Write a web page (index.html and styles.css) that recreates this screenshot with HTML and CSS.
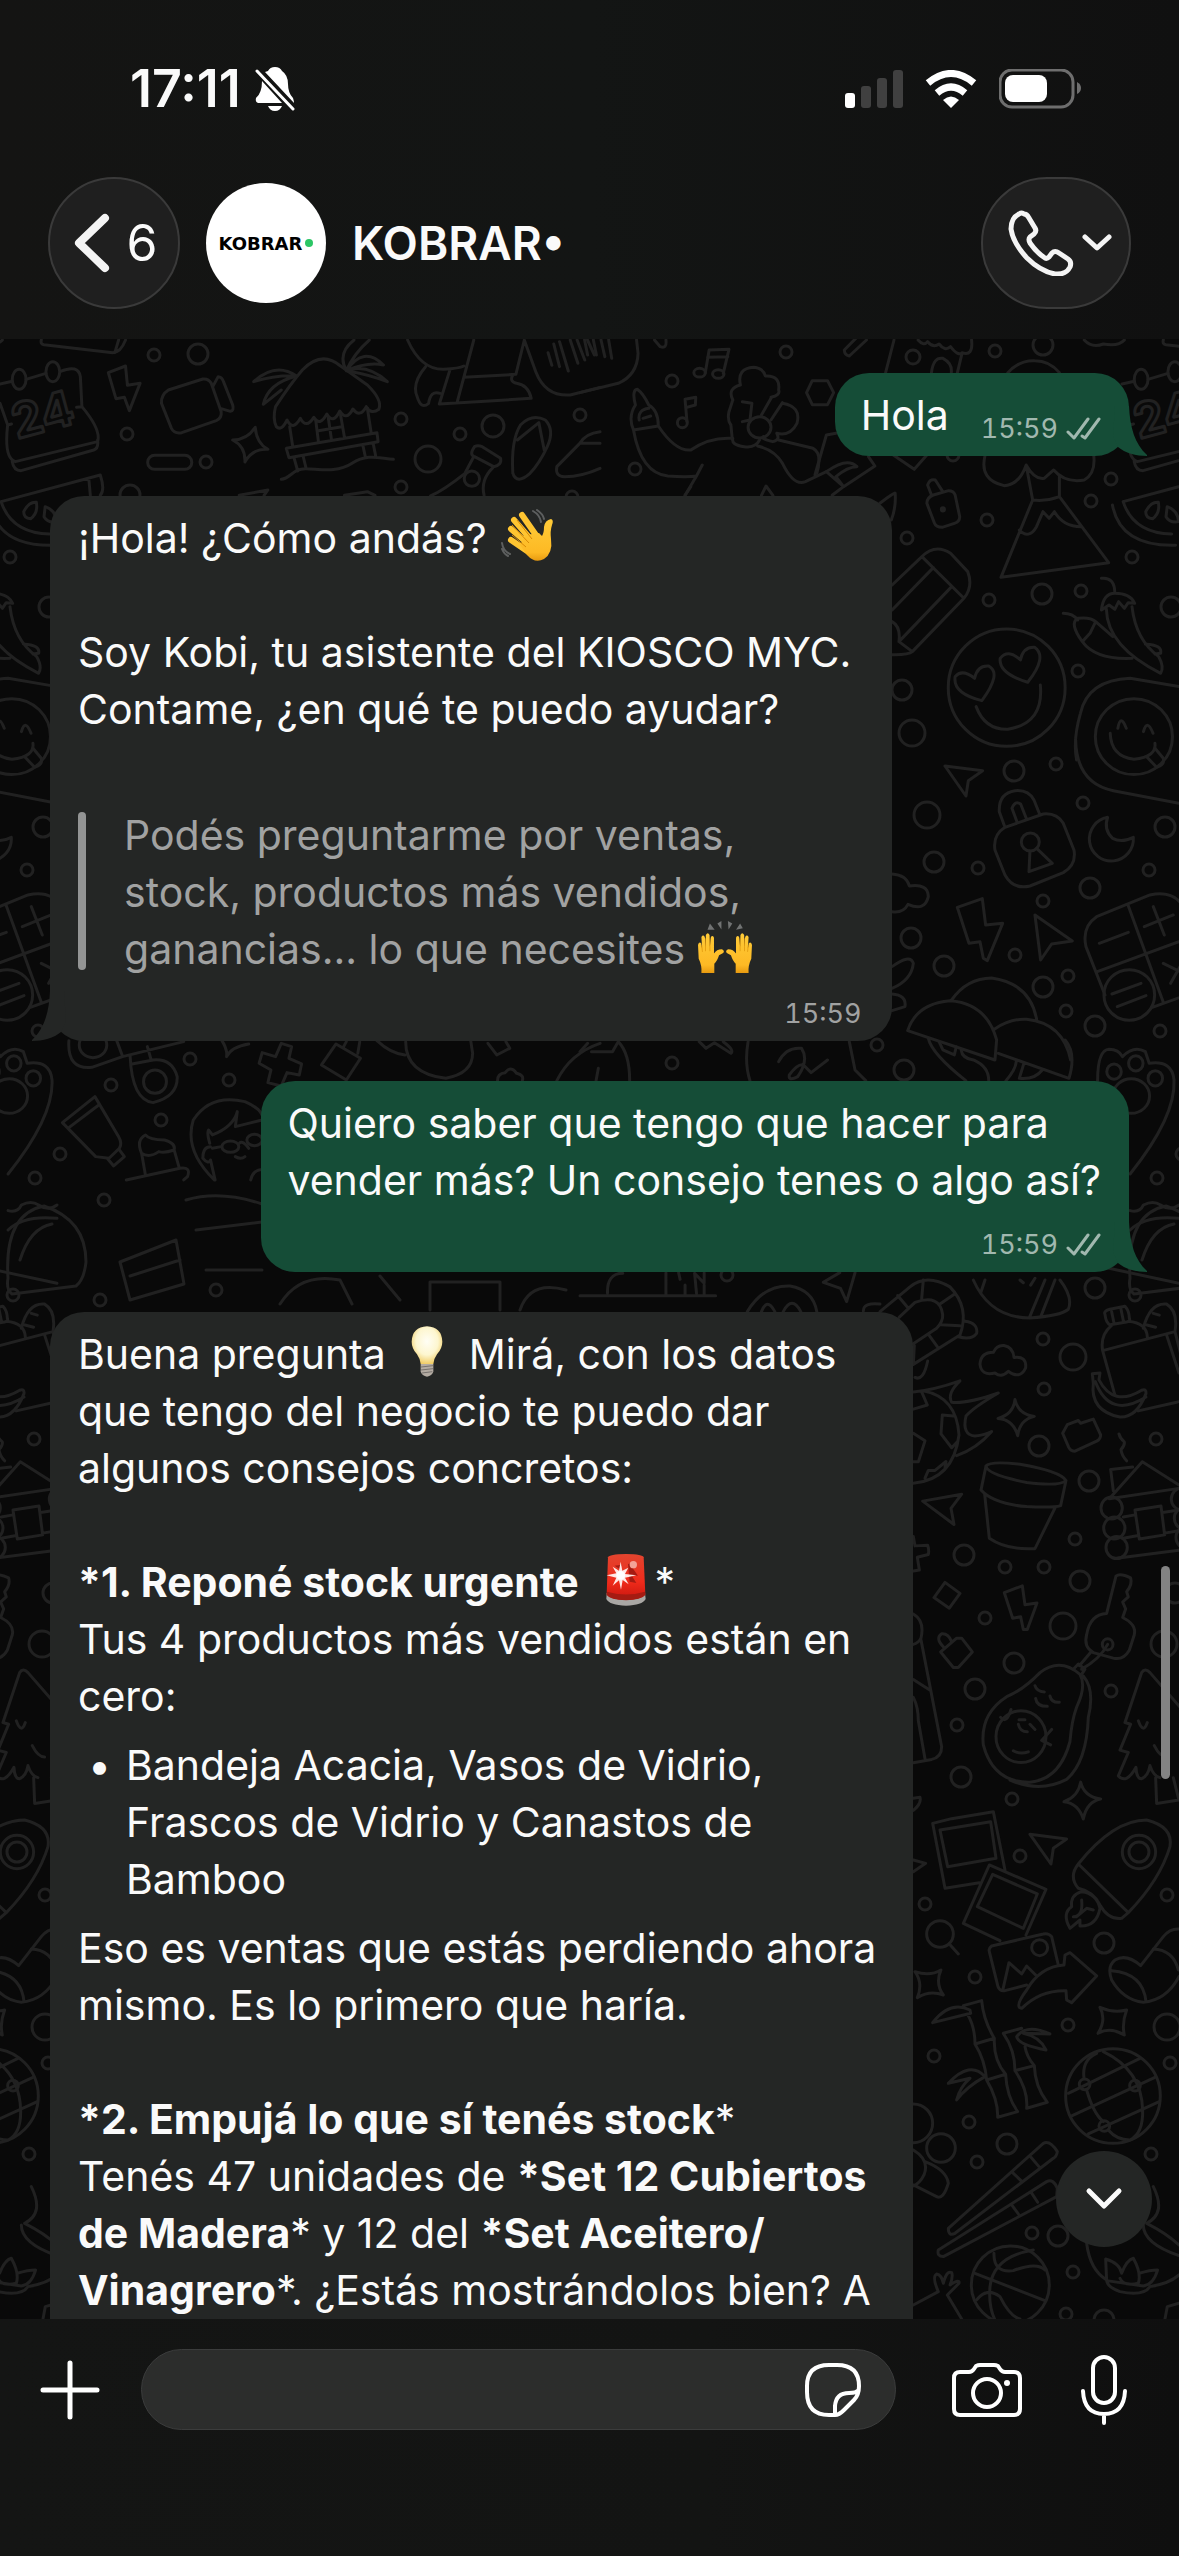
FILE: index.html
```html
<!DOCTYPE html>
<html lang="es">
<head>
    <meta charset="UTF-8">
    <meta name="viewport" content="width=device-width, initial-scale=1.0">
    <title>KOBRAR</title>
    <link rel="stylesheet" href="styles.css">
</head>
<body>
    <header class="top">
        <div class="status-bar">
            <span class="clock">17:11</span>
            <svg class="bell" width="40" height="44" viewBox="0 0 40 44">
                <path fill="#fff" d="M10 5 Q13 4 13 4 Q15 0 20 0 Q25 0 27 4 Q33 8 33 17 Q33 26 38 31 Q39 34 39 36 Z"/>
                <path fill="#fff" d="M7 14 L27 36 H3 Q0 35 1 31 Q7 26 7 14Z M13 39 H27 Q25 44 20 44 Q15 44 13 39Z"/>
                <path stroke="#fff" stroke-width="3" stroke-linecap="round" d="M2 4 L38 42"/>
            </svg>
            <div class="status-icons">
                <svg width="58" height="38" viewBox="0 0 58 38">
                    <rect x="0" y="23" width="10" height="15" rx="3" fill="#fff"/>
                    <rect x="16" y="16" width="10" height="22" rx="3" fill="#404040"/>
                    <rect x="32" y="8" width="10" height="30" rx="3" fill="#404040"/>
                    <rect x="48" y="0" width="10" height="38" rx="3" fill="#404040"/>
                </svg>
                <svg width="52" height="38" viewBox="0 0 52 38">
                    <g fill="none" stroke="#fff" stroke-width="7">
                        <path d="M3 13 Q26 -6 49 13"/>
                        <path d="M12 23 Q26 11 40 23"/>
                    </g>
                    <path fill="#fff" d="M18 30 Q26 23 34 30 L26 38Z"/>
                </svg>
                <svg width="82" height="40" viewBox="0 0 82 40">
                    <rect x="1" y="1" width="73" height="37" rx="12" fill="none" stroke="#6e6e6e" stroke-width="3"/>
                    <rect x="6" y="6" width="42" height="27" rx="8" fill="#fff"/>
                    <path fill="#6e6e6e" d="M78 13 Q82 15 82 19 Q82 23 78 25Z"/>
                </svg>
            </div>
        </div>
        <div class="nav">
            <button class="back-btn glass" aria-label="Volver">
                <svg width="36" height="60" viewBox="0 0 36 60"><path d="M31 5 L5 30 L31 55" fill="none" stroke="#f4f4f4" stroke-width="8" stroke-linecap="round" stroke-linejoin="round"/></svg>
                <span>6</span>
            </button>
            <div class="avatar">
                <span>KOBRAR</span><i></i>
            </div>
            <h1>KOBRAR•</h1>
            <button class="call-btn glass" aria-label="Llamar">
                <svg width="66" height="66" viewBox="0 0 66 66" fill="none" stroke="#f4f4f4" stroke-width="5" stroke-linejoin="round" stroke-linecap="round">
                    <path d="M16 4 Q19 4 21 8 L27 18 Q29 21 26 24 L22 27 Q20 29 22 33 Q29 43 37 48 Q39 49 41 47 L44 43 Q47 40 51 43 L60 49 Q64 52 62 57 Q58 65 47 64 Q32 61 19 48 Q5 33 3 19 Q3 8 11 4 Q14 2 16 4Z"/>
                </svg>
                <svg width="30" height="18" viewBox="0 0 30 18"><path d="M3 3 L15 14 L27 3" fill="none" stroke="#f4f4f4" stroke-width="5" stroke-linecap="round" stroke-linejoin="round"/></svg>
            </button>
        </div>
    </header>

    <main class="chat">
        <svg class="wallpaper" viewBox="0 339 1179 1980" preserveAspectRatio="xMidYMin slice" aria-hidden="true">
            <g id="tile">
                <g id="bubbles"></g>
                <text class="day" x="17" y="439" transform="rotate(-15 17 439)">24</text>

                <!-- calendar, camera, beach hut, bottle, watermelon -->
                <g transform="translate(0 340) scale(.3827 .3333)">
                    <path d="M108 0 Q105 12 115 14 L295 38 Q315 38 328 0 M310 0 L300 38"/>
                    <ellipse cx="50" cy="118" rx="18" ry="30"/><ellipse cx="138" cy="95" rx="18" ry="30"/>
                    <path d="M0 132 L32 124 M68 118 L120 100 M158 94 Q205 72 210 110 L214 200 M0 190 L20 255 L30 252 M200 202 L214 200 Q265 270 255 305 L40 365 Q10 355 20 255 M32 365 Q36 392 55 392 L245 330 Q258 325 255 300"/>
                    <path d="M283 98 L328 78 L333 136 L366 130 L338 212 L325 172 L303 176Z"/>
                    <path d="M440 150 L530 117 Q545 115 552 130 L578 215 Q580 235 565 242 L475 278 Q455 282 448 265 L422 190 Q420 165 440 150Z M556 140 L570 110 Q580 110 584 125 L608 195 Q612 212 602 214 L576 205"/>
                    <path d="M667 262 Q670 310 700 328 Q660 325 640 366 Q642 320 608 300 Q645 300 667 262Z"/>
                    <rect x="386" y="346" width="115" height="42" rx="18" ry="20"/>
                    <path d="M720 200 Q760 130 790 90 Q840 30 890 78 L960 135 Q1000 180 990 208 Q970 225 957 200 Q940 235 922 207 Q905 245 888 213 Q870 255 854 222 Q835 262 820 232 Q800 268 785 235 Q765 275 750 240 Q735 275 722 260 Q712 235 720 200Z"/>
                    <path d="M748 325 L985 278 L988 305 L755 353Z M757 260 L765 320 M960 205 L970 280 M825 240 L832 305 M890 225 L900 292 M858 235 L866 298 M832 272 L893 260 M768 352 L778 393 M792 348 L800 386 M948 315 L955 352 M975 310 L982 350 M735 418 C760 415 765 385 800 386 S880 400 920 370 S990 355 1028 358"/>
                    <path d="M775 108 Q720 65 663 125 Q720 105 775 108 Q700 130 688 193 L735 150 M905 92 Q880 40 925 0 M905 92 Q925 40 965 0 M905 92 Q950 15 1002 75 Q960 65 905 92 Q960 70 1012 125 Q970 105 905 92"/>
                    <path d="M1065 0 Q1100 90 1160 88 Q1200 85 1212 78 M1238 0 L1195 185 M1112 80 Q1075 130 1090 170 Q1100 210 1120 190 Q1125 150 1150 160 M1175 92 L1148 192 L1388 175 Q1380 135 1350 130 Q1330 125 1340 105 M1212 112 L1348 103 L1370 0 L1400 95 Q1425 170 1490 165 L1568 142"/>
                    <path d="M1432 38 l10 38 M1447 12 l15 68 M1462 5 l23 88 M1490 0 l20 70 M1508 0 l20 60 M1535 0 l18 45"/>
                    <path d="M1240 320 Q1225 345 1240 350 L1290 380 Q1312 375 1308 355 L1260 320 Q1248 315 1240 320 M1237 352 L1215 400 Q1160 450 1125 468 M1288 383 Q1255 420 1265 466"/>
                    <ellipse cx="1233" cy="416" rx="20" ry="23"/>
                    <path d="M1340 400 Q1335 300 1360 255 Q1390 220 1425 240 Q1450 270 1430 320 Q1410 370 1385 400 Q1350 435 1340 400 M1352 300 L1408 248 L1422 330 M1568 275 Q1530 280 1515 310 L1455 380 Q1450 410 1475 410 Q1520 410 1568 385 M1515 310 L1568 310"/>
                    <path d="M3 485 L262 405 Q275 450 262 466 M3 485 Q30 580 130 582 M232 415 L236 466 M-25 495 Q-5 620 140 616 M62 515 Q75 485 95 487 Q100 520 80 536 Q62 535 62 515Z M118 500 Q145 510 148 545 Q125 550 115 530Z"/>
                    <path d="M625 466 L700 450 L690 466 M900 466 L960 455 L980 466"/>
                </g>

                <!-- singer, volcano, pencil, chilies, smileys -->
                <g transform="translate(580 340) scale(.382 .3333)">
                    <path d="M0 158 L100 130 Q150 105 152 40 L148 0 M12 0 l8 45 M35 0 l8 45 M55 0 l10 50 M75 0 l8 55 M195 0 L210 20 Q228 28 225 0"/>
                    <path d="M328 98 L338 30 L390 28 L375 100 M334 52 L387 50 M280 245 L275 178 L303 172 L302 195 L277 203"/>
                    <ellipse cx="313" cy="98" rx="15" ry="13"/><ellipse cx="362" cy="102" rx="15" ry="13"/><ellipse cx="268" cy="248" rx="13" ry="15"/>
                    <path d="M140 270 Q125 230 145 195 Q135 150 150 148 Q165 160 180 195 Q205 210 205 258 L140 270 M155 240 Q150 210 180 205 M165 235 L185 228 M140 270 Q160 400 230 408 Q280 412 305 408 L320 375 M305 408 L275 466 M205 258 Q250 335 290 330 Q340 290 400 295 Q395 315 430 320 Q460 325 470 300 M465 318 Q510 330 530 370 Q560 440 590 425 L645 395"/>
                    <path d="M400 180 Q385 145 420 135 Q410 85 455 82 Q480 85 485 108 Q525 105 520 150 Q525 165 500 172 M400 180 L390 215 Q385 240 395 255 L398 290 M500 175 L475 225 M530 188 L500 240 M530 190 Q580 200 568 250 Q550 290 515 280 Q525 300 505 305 Q470 295 480 290 M520 300 L610 325 Q635 340 620 400 M425 185 L450 190 L445 240 L425 245"/>
                    <ellipse cx="470" cy="262" rx="30" ry="32"/>
                    <path d="M608 122 L648 122 L664 158 L648 194 L608 194 L593 158Z M615 405 L645 285 L670 280 M645 395 L690 440 L772 378 L755 350 M690 440 L660 466 M645 395 Q700 350 725 380 Q700 380 670 410 L690 440"/>
                    <path d="M692 30 L735 -20 M705 48 L750 0 M692 30 Q692 45 705 48 M800 98 L822 0 M920 98 Q925 50 950 55 Q975 70 972 98 M988 98 L1000 40 M885 0 Q900 20 910 5 Q925 25 940 12 Q955 35 970 20 Q990 50 1000 38 Q1030 50 1025 0 M1120 98 Q1150 60 1190 62 Q1230 62 1255 98 M1320 0 Q1340 25 1370 12 Q1410 20 1425 0 M820 345 L875 388 L908 345 M275 466 L290 440 M475 466 L487 438 L505 466"/>
                    <path d="M925 465 L965 452 Q978 452 982 465 L994 530 Q994 545 980 550 L948 562 Q932 562 928 550 L908 490 Q908 472 925 465Z M920 465 L910 435 Q915 415 930 420 L948 452"/>
                    <ellipse cx="950" cy="508" rx="4" ry="5"/>
                    <path d="M1060 348 Q1045 420 1110 437 Q1150 435 1168 375 Q1190 420 1215 415 L1240 390 Q1270 430 1320 420 Q1350 400 1345 348 M1168 375 L1185 480 Q1220 485 1255 470 L1255 405 M1185 480 L1102 712 L1384 668 L1255 470 M1150 570 Q1175 600 1195 560 L1212 515 L1228 535 L1242 515 Q1265 560 1312 560"/>
                    <path d="M785 490 Q825 455 825 460 Q828 500 815 540 M817 735 L895 650 Q930 610 970 640 L1015 695 Q1030 740 1005 775 L870 935 Q860 945 817 944 M895 650 L1005 775 M925 683 L817 810 M973 740 L835 905 L870 935 M835 905 Q840 860 817 845"/>
                    <ellipse cx="1117" cy="1043" rx="153" ry="176"/>
                    <path d="M1052 1082 Q975 1060 982 1010 Q1000 985 1033 1015 Q1040 975 1070 978 Q1105 1000 1052 1082Z M1172 1027 Q1095 1000 1100 955 Q1120 925 1153 960 Q1160 920 1190 922 Q1225 950 1172 1027Z M1037 1100 Q1060 1170 1120 1168 Q1215 1150 1205 1035"/>
                    <path d="M1365 715 Q1400 710 1400 760 M1365 810 Q1370 760 1400 760 Q1440 760 1452 790 L1435 788 L1425 805 L1410 785 L1400 808 L1385 795 L1365 810 M1378 808 Q1380 920 1520 1000 Q1530 980 1515 950 Q1455 900 1445 800 M1265 820 Q1290 820 1303 840 M1315 905 Q1280 850 1303 835 Q1335 830 1350 845 L1335 880 L1315 905 Q1350 960 1445 955 M1350 845 L1395 890 M1480 912 Q1525 915 1520 940 L1505 942"/>
                    <ellipse cx="1450" cy="1190" rx="101" ry="114"/>
                    <path d="M1568 1040 L1440 1015 Q1330 1020 1310 1120 Q1290 1200 1300 1260 M1408 1165 Q1415 1120 1430 1165 M1475 1175 Q1485 1135 1500 1180 M1388 1180 Q1390 1250 1450 1258 Q1510 1250 1505 1210"/>
                </g>

                <!-- padlock, moon, chocolate, mushrooms -->
                <g transform="translate(680 740) scale(.3333)">
                    <path d="M1187 0 Q1190 130 1300 152 L1497 190 M1400 50 L1430 82 Q1455 75 1450 55 L1425 25"/>
                    <path d="M795 78 L908 92 L865 122 L858 168Z M1065 525 L1177 603 L1115 612 L1082 660Z M832 502 L907 476 L917 555 L968 550 L922 662 L910 655 L900 605 L867 610Z"/>
                    <path d="M975 262 L1090 222 Q1130 218 1150 250 L1182 330 Q1190 375 1150 398 L1050 438 Q1000 450 975 405 L945 330 Q938 285 975 262Z M975 262 L958 215 Q955 160 1005 152 Q1045 148 1062 180 L1080 225 M1012 248 L996 205 Q1005 180 1022 192 L1040 238 M1050 333 L1047 395 L1117 370 L1070 325"/>
                    <circle cx="1051" cy="306" r="27"/>
                    <path d="M1283 232 A66 66 0 1 0 1360 292 Q1325 310 1298 295 Q1270 270 1283 232Z"/>
                    <path d="M636 402 Q680 405 688 438 Q745 430 745 470 Q735 515 684 493 Q670 520 636 515 M636 680 Q690 640 700 670 Q695 720 636 745 M636 762 Q680 765 675 800 L636 812"/>
                    <path d="M1250 530 L1410 465 Q1480 450 1510 500 M1250 530 Q1205 560 1218 620 L1275 765 M1345 497 L1450 787 M1252 695 L1510 600 M1415 803 L1520 765 M1258 610 L1345 577 M1393 560 L1480 525 M1420 500 L1453 585 M1450 670 L1510 700 M1472 730 L1500 680 M1296 762 L1383 730 M1312 800 L1398 767"/>
                    <circle cx="1348" cy="765" r="76"/>
                    <path d="M683 872 Q710 790 810 782 Q920 790 950 900 L945 960 L683 872 M815 780 Q860 715 935 714 Q1050 730 1070 838 M943 868 Q990 835 1040 838 Q1150 850 1172 960"/>
                </g>
                <g transform="translate(580 1000) scale(.382 .3333)">
                    <path d="M1095 160 L1280 235 Q1300 160 1270 120 M912 115 Q920 160 1010 242 M940 125 L950 150 L980 165 L985 140 M998 150 Q1000 175 1030 180 Q1070 200 1070 242 M1142 185 Q1140 210 1115 242 M1162 190 L1150 235 Q1190 240 1210 210"/>
                    <ellipse cx="1398" cy="215" rx="19" ry="23"/><ellipse cx="1455" cy="190" rx="19" ry="23"/><ellipse cx="1506" cy="235" rx="19" ry="23"/><ellipse cx="1443" cy="288" rx="48" ry="52"/>
                    <path d="M1355 242 Q1355 150 1385 148 Q1410 148 1420 170 Q1450 135 1480 155 L1490 190 Q1550 180 1555 240 Q1560 350 1440 522"/>
                    <path d="M312 125 L330 145 L352 128 L395 160 Q405 150 375 125 M440 125 Q430 190 445 242 M705 125 L720 210 L748 242 M520 185 Q540 140 580 145 Q600 180 570 230 Q545 245 548 225 Q570 190 585 195 L605 218 L648 180 M20 130 L0 155 M30 155 L85 155 L100 125 Q130 160 130 242 M48 205 L42 242"/>
                    <path d="M0 887 L355 887 M72 880 Q70 820 112 820 M225 818 V885 M258 818 L262 838 M275 855 V885 M305 880 L300 820 L325 850 V818 M325 885 V855 M438 935 Q480 855 550 858 Q610 870 620 935 M475 935 Q490 890 510 935 M532 935 Q555 885 578 935 M720 818 L698 905 L682 865 L637 847 L680 818"/>
                    <path d="M1440 632 Q1465 640 1475 615 Q1500 600 1520 615 Q1545 635 1568 615 M1440 690 Q1480 645 1568 655 M1385 805 L1568 850"/>
                </g>

                <!-- drumstick, tube, cupcake, bearded man -->
                <g transform="translate(0 760) scale(.3827 .3333)">
                    <path d="M735 850 L762 860 L755 895 L788 912 L782 945 L750 938 L735 978 L700 968 L708 930 L677 910 L685 878 L720 890Z M878 852 L942 895 L905 960 L840 915Z M898 860 L905 845 M935 880 L940 845"/>
                    <path d="M180 842 Q175 930 240 922 L320 890 L480 845 M305 842 L320 888 M340 888 Q345 1020 400 1028 Q465 1010 463 950 Q450 895 400 900 L345 912 M385 860 L395 900 M580 842 Q595 870 592 890 Q605 860 650 852 M985 842 Q1020 880 1058 885 M1060 845 Q1060 940 1165 955 Q1235 940 1235 880 L1230 842 M1275 850 L1298 885 L1332 865 L1322 845 M1300 962 Q1300 940 1320 938 Q1335 915 1350 940 Q1370 945 1365 962 M1455 962 Q1490 880 1568 850"/>
                    <ellipse cx="243" cy="855" rx="36" ry="38"/><ellipse cx="405" cy="965" rx="30" ry="35"/>
                    <path d="M248 1010 L163 1088 L250 1190 L285 1195 L312 1165 Q320 1150 310 1130Z M180 1103 L258 1035 M280 1195 L297 1218 L325 1190 L312 1170"/>
                    <path d="M560 1260 Q480 1170 505 1080 Q550 1000 640 1025 Q690 1050 687 1080 M548 1150 Q540 1120 545 1110 L555 1125 Q610 1100 620 1055 L615 1100 L685 1080 M555 1165 L578 1160 M625 1150 Q635 1140 650 1165 M615 1190 Q630 1200 640 1190 M550 1160 Q530 1160 530 1195 Q545 1215 550 1200 L562 1260 M655 1260 Q660 1230 687 1228"/>
                    <ellipse cx="602" cy="1160" rx="22" ry="17"/><ellipse cx="665" cy="1140" rx="20" ry="17"/>
                    <path d="M370 1180 Q355 1140 380 1125 Q390 1140 430 1140 Q460 1150 455 1170 Q430 1180 415 1175 Q390 1195 370 1180 L380 1245 M455 1170 L468 1222 M330 1260 L470 1225 Q500 1220 490 1250 L480 1260"/>
                </g>
                <path d="M8 1278 Q4 1214 44 1206 Q86 1220 86 1262 Q84 1280 76 1286 L12 1294 Q6 1290 8 1278 M20 1260 Q30 1228 52 1224 M120 1262 L176 1240 L184 1284 L130 1300Z M130 1276 L180 1260 M186 1200 Q220 1190 262 1204 M196 1230 L262 1222 M206 1270 H262 M280 1304 Q300 1272 340 1280 L352 1304 M380 1276 L400 1300 M430 1310 V1282 H500 V1310 M520 1310 Q530 1280 566 1290"/>

                <!-- life ring, groceries, comet, flowerpot, cabin, avocado, tree -->
                <g transform="translate(860 1280) scale(.3333 .3444)">
                    <path d="M118 108 L165 65 Q240 40 248 100 Q250 120 230 140 L160 185 M60 92 L150 20 Q200 -20 270 20 Q330 80 300 160 L160 245 M113 45 L145 82 M190 0 L185 55 M240 70 L285 40 M243 130 L300 133 M207 160 L235 198 M10 90 Q10 65 60 70 M315 120 Q355 125 350 155 Q335 175 295 165 M165 283 Q190 295 203 235 M160 245 L163 190"/>
                    <path d="M340 0 Q390 110 510 110 Q600 105 625 85 Q640 50 600 0 M375 0 L362 38 M555 0 L510 105 M585 0 L543 105 M480 0 L490 8 M525 -5 L512 15"/>
                    <path d="M400 210 Q410 188 432 190 Q460 195 462 225 Q500 220 497 255 Q480 290 445 265 Q425 285 405 270 Q365 280 360 245 Q362 210 400 210Z M465 347 Q475 390 523 396 Q480 405 473 452 Q460 405 414 402 Q460 390 465 347Z"/>
                    <path d="M735 100 Q730 90 750 85 L795 76 Q808 90 808 110 Q812 120 800 122 L750 130 Q738 125 735 100 M755 92 L762 125 M782 80 L790 118 M755 132 Q720 160 728 205 L765 335 M728 205 L945 150 L985 300 Q990 345 950 355 L835 380 M805 120 Q860 125 862 165 M850 140 Q870 65 920 70 Q955 90 945 150 M880 97 L898 102 M858 130 L887 137 M920 160 L957 270"/>
                    <path d="M697 272 L720 270 L717 290 Q760 370 845 320 Q860 315 858 330 Q830 400 780 398 Q690 380 700 300Z M706 295 Q750 405 858 340"/>
                    <path d="M160 325 Q220 320 300 293 Q260 330 275 355 Q320 360 415 328 Q340 370 318 395 Q305 450 345 453 Q375 450 395 440 Q350 490 290 510 M190 322 Q290 340 297 450 Q280 580 160 590 M160 375 L202 363 L185 325 M280 395 L247 392 L243 447 L275 487 L292 470 M160 445 L195 467 L175 528 L160 528 M195 575 L205 553 L225 553 L258 527 L255 545"/>
                    <path d="M608 445 L622 420 L655 408 L662 416 L700 404 L722 450 Q722 462 710 468 L645 497 Q632 497 626 485Z"/>
                    <path d="M378 540 Q390 525 480 535 Q600 555 618 582 Q600 600 500 588 Q380 565 378 540 L363 610 Q400 650 500 658 Q580 662 602 655 L618 582 M374 622 L388 750 Q440 785 525 780 L585 662"/>
                    <path d="M777 447 Q780 460 793 470 Q795 480 783 492 Q785 510 800 525 M748 635 L847 528 L957 595 M748 635 L957 605 M818 543 L752 550 L760 612 M790 688 L825 682 M790 750 L835 742 M825 668 L903 656 L914 740 L838 752Z M908 675 L957 668 M914 735 L957 728 M770 808 L957 785"/>
                    <circle cx="755" cy="662" r="32"/><circle cx="763" cy="720" r="32"/><circle cx="770" cy="777" r="32"/><circle cx="966" cy="636" r="32"/><circle cx="975" cy="692" r="32"/><circle cx="980" cy="748" r="32"/>
                    <path d="M188 642 L305 622 L273 663 L282 710Z M160 745 L165 772 L203 770 Q208 785 205 797 L172 805 L178 842 L160 845 M255 878 L300 910 L268 953 L222 922Z M433 908 L487 888 L495 943 L531 938 L502 1015 L490 1015 L482 978 L458 982Z"/>
                    <path d="M740 968 L768 860 Q780 850 812 865 Q818 885 800 905 L805 920 L788 935 L797 955 L788 980 Q830 1000 823 1030 L808 1075 Q790 1105 760 1098 L700 1082 Q670 1065 680 1030 Q690 970 740 968 M743 1058 Q720 1100 665 1130 M693 1080 L658 1120 M640 1130 L655 1115 L675 1130 L665 1145"/>
                    <circle cx="743" cy="1058" r="16"/>
                    <path d="M242 1080 L290 1040 L305 1040 L337 1080 L295 1125 L280 1125Z M250 1065 Q225 1040 245 1027 Q265 1025 275 1050"/>
                    <path d="M540 1140 Q600 1095 660 1145 Q680 1180 650 1240 Q635 1280 630 1340 Q600 1450 510 1458 Q400 1460 370 1350 Q360 1260 440 1210 Q490 1190 540 1140Z M670 1150 Q705 1190 685 1270 Q680 1400 620 1450 Q540 1490 450 1452 M525 1178 Q530 1195 553 1196 M527 1215 Q530 1238 562 1238 M570 1208 Q575 1228 598 1226 M475 1290 Q480 1312 502 1312 M510 1290 L525 1305 M460 1367 Q480 1378 505 1370 M477 1277 H495 M422 1270 Q440 1290 453 1247 M575 1305 L545 1337 L572 1350"/>
                    <circle cx="483" cy="1326" r="75"/>
                    <path d="M795 1285 L845 1140 Q855 1125 870 1140 L960 1240 M795 1285 L812 1290 L780 1365 L805 1372 L775 1440 Q800 1465 828 1415 Q830 1450 845 1448 Q865 1440 870 1410 Q880 1440 900 1445 M835 1280 Q850 1320 862 1285 M883 1352 Q900 1385 920 1385 M887 1445 L890 1520 L957 1510 L940 1445 M160 970 Q195 990 183 1040 Q175 1055 160 1058 M183 1045 L245 1355 Q245 1385 215 1392 L160 1402 M160 1160 L208 1190 M160 1212 Q175 1240 175 1280 L195 1390"/>
                    <path d="M662 1458 Q672 1500 722 1507 Q680 1515 670 1565 Q655 1520 612 1515 Q655 1500 662 1458Z M160 1540 Q185 1520 180 1502 L160 1505"/>
                </g>

                <!-- photos, rocket, bamboo, globe, chopsticks, basketball -->
                <g transform="translate(860 1820) scale(.3333)">
                    <path d="M275 -4 L218 10 L255 205 L358 188 M275 -4 L400 -25 L435 150 M240 30 L392 5 L408 115 L263 140Z M388 135 L558 208 L498 345 M388 135 L310 310 L420 362 M398 163 L532 222 L490 325 L352 260Z M595 435 L575 350 Q565 338 550 342 L395 378 Q385 385 388 395 L414 500 Q420 515 435 512 L500 495 M428 512 L447 428 L485 462 L500 438 L530 468"/>
                    <circle cx="539" cy="383" r="24"/>
                    <path d="M478 562 Q470 550 500 510 Q540 440 612 435 L615 405 L630 398 L710 468 L635 548 L620 540 L618 512 Q540 510 485 565Z M510 43 L620 57 L580 85 L573 132Z M165 455 Q210 470 243 450 Q225 490 250 525 Q210 510 172 533 Q190 490 165 455Z M720 562 Q760 580 800 570 Q785 610 793 645 Q750 620 714 640 Q740 600 720 562Z M268 372 L295 402 M160 120 L197 130 L160 155"/>
                    <circle cx="240" cy="342" r="40"/>
                    <path d="M655 132 Q760 0 860 0 Q940 20 930 80 Q900 180 805 278 L655 132 Q625 170 655 205 Q700 215 720 255 Q745 300 785 295 L805 278 M630 325 Q605 280 635 260 Q630 225 665 215 Q710 220 720 265 Q710 320 660 318 L660 300Z M640 290 Q670 290 665 240 M650 290 L680 265 L700 270"/>
                    <circle cx="837" cy="96" r="50"/><circle cx="837" cy="96" r="30"/>
                    <path d="M957 327 Q930 325 910 350 L842 437 Q800 400 765 420 Q740 440 755 480 Q790 540 850 547 Q920 540 957 470 M880 387 Q940 390 955 450 M755 452 Q850 460 858 545"/>
                    <path d="M625 820 L840 715 M635 888 L885 772 M685 942 L898 845 M672 775 Q665 720 710 700 M680 810 Q700 880 730 905 M745 930 Q770 960 810 960 Q850 940 848 870 Q845 750 730 695"/>
                    <circle cx="759" cy="828" r="142"/><circle cx="674" cy="793" r="16"/><circle cx="825" cy="797" r="16"/><circle cx="733" cy="918" r="16"/>
                    <path d="M310 557 L365 542 Q370 600 403 655 L345 672 Q345 620 322 582 M345 672 Q375 720 380 780 L437 763 Q400 720 403 655 M380 780 Q415 840 413 892 L473 875 Q440 830 437 763 M218 608 Q270 540 330 570 L332 580 L218 608 M265 790 Q330 720 375 770 Q320 800 290 840 Q300 800 330 775Z M485 625 L430 640 Q465 690 465 752 L523 737 Q500 710 495 680 M465 752 Q505 810 500 865 L562 847 Q525 800 523 737 M570 642 Q500 610 470 650 Q475 675 558 690 Q540 650 490 640Z"/>
                    <path d="M265 1225 L550 970 Q570 960 592 995 Q590 1010 580 1015 L285 1240 Q265 1250 265 1225Z M458 1058 L483 1082 M513 1012 L537 1040 M235 1290 L560 1085 Q580 1075 592 1105 L590 1130 L250 1310 Q230 1310 235 1290Z M455 1155 L475 1182 M512 1115 L533 1147"/>
                    <circle cx="451" cy="1395" r="117"/><circle cx="160" cy="910" r="58"/><circle cx="243" cy="984" r="43"/>
                    <path d="M345 1360 L555 1442 M520 1290 Q400 1310 390 1400 Q385 1460 405 1500 M402 1300 Q400 1360 460 1352 Q530 1325 555 1350 M350 1440 Q380 1400 420 1430 Q450 1490 480 1497 M160 990 Q210 1020 192 1065 Q180 1090 160 1098 M195 1025 Q260 1050 265 1090 Q250 1140 230 1130 L160 1095 M160 1455 L235 1415 Q215 1370 230 1362 Q245 1365 250 1390 Q260 1350 275 1358 Q280 1370 270 1395 Q300 1375 297 1390 L262 1425 L305 1497"/>
                    <path d="M880 1100 Q920 1180 860 1210 M680 1270 Q690 1350 740 1380 Q740 1400 780 1415 Q850 1430 870 1400 Q930 1390 957 1365 M850 1215 Q850 1270 957 1307 M860 1210 Q920 1240 957 1275 M740 1382 L737 1317 Q780 1330 785 1360 Q800 1320 820 1315 Q845 1360 835 1390 Q790 1400 780 1375 M838 1360 Q870 1350 893 1350 Q880 1395 850 1398 L740 1382 M915 1497 L922 1460 L957 1450"/>
                </g>
            </g>
            <use href="#tile" x="1122"/>
            <use href="#tile" x="-1122"/>
        </svg>

        <div class="message out">
            <div class="inline-row">
                <p>Hola</p>
                <div class="meta">15:59 <svg width="35" height="24" viewBox="0 0 35 24"><use href="#checks"/></svg></div>
            </div>
            <svg class="tail" width="40" height="50" viewBox="0 0 40 50"><use href="#tail-shape"/></svg>
        </div>

        <div class="message in">
            <p>¡Hola! ¿Cómo andás?
                <svg class="emoji" viewBox="0 0 56 56" role="img" aria-label="mano saludando">
                    <g fill="none" stroke="#5d5f5f" stroke-width="2" stroke-linecap="round"><path d="M33 2 Q40 6 41 13 M37 1 Q43 5 44 10 M2 34 Q3 42 10 45 M2 40 Q4 45 8 47"/></g>
                    <g stroke="#ffc531" stroke-width="6" stroke-linecap="round" fill="none"><path d="M22 6 L38 29 M14 11 L34 34 M11 20 L32 38 M11 31 L30 44"/></g>
                    <path fill="url(#skin)" d="M26 26 L39 24 L42 27 Q44 24 44 18 Q45 11 51 10 Q54 11 52 16 Q50 22 51 30 Q53 44 44 50 Q35 55 27 46 L20 36Z"/>
                    <path d="M17 11 L32 30 M12 16 L29 34 M12 26 L26 38" stroke="#d98a05" stroke-width="1" fill="none"/>
                </svg></p>
            <p class="para">Soy Kobi, tu asistente del KIOSCO MYC.<br>Contame, ¿en qué te puedo ayudar?</p>
            <blockquote>Podés preguntarme por ventas,<br>stock, productos más vendidos,<br>ganancias... lo que necesites
                <svg class="emoji tight" viewBox="45 546 165 165" role="img" aria-label="manos levantadas">
                    <path fill="#717373" d="M76 575 L83 556 L97 575Z M105 556 L117 549 L117 574Z M136 549 L149 556 L138 574Z M160 575 L172 556 L180 570Z"/>
                    <g id="palm">
                        <path fill="url(#skin)" d="M58 702 Q60 680 50 660 L48 620 Q50 608 57 614 L60 630 L58 596 Q63 588 68 596 L71 625 L71 590 Q77 580 82 590 L83 625 L86 595 Q93 590 95 598 L95 645 Q103 632 118 632 Q128 637 122 643 L110 650 Q104 668 96 675 L96 702Z"/>
                        <path stroke="#dc9207" stroke-width="2" fill="none" d="M59 620 L61 640 M70 600 V638 M83 600 V638"/>
                    </g>
                    <use href="#palm" transform="translate(255 0) scale(-1 1)"/>
                </svg></blockquote>
            <div class="meta">15:59</div>
            <svg class="tail" width="40" height="50" viewBox="0 0 40 50"><use href="#tail-shape"/></svg>
        </div>

        <div class="message out">
            <p>Quiero saber que tengo que hacer para<br>vender más? Un consejo tenes o algo así?</p>
            <div class="meta">15:59 <svg width="35" height="24" viewBox="0 0 35 24"><use href="#checks"/></svg></div>
            <svg class="tail" width="40" height="50" viewBox="0 0 40 50"><use href="#tail-shape"/></svg>
        </div>

        <div class="message in last">
            <p>Buena pregunta
                <svg class="emoji" viewBox="56 80 168 168" role="img" aria-label="bombilla">
                    <path fill="url(#bulb)" d="M140 84 Q184 86 186 130 Q186 150 170 168 Q160 182 159 197 H121 Q120 182 110 168 Q94 150 94 130 Q96 86 140 84Z"/>
                    <path fill="#b3aba2" d="M121 197 H159 V220 Q155 232 140 235 Q125 232 121 220Z"/>
                    <path stroke="#77726e" stroke-width="3" d="M122 206 L158 202 M122 215 L158 211 M125 224 L156 220"/>
                </svg>
                Mirá, con los datos<br>que tengo del negocio te puedo dar<br>algunos consejos concretos:</p>
            <p class="para"><strong>*1. Reponé stock urgente
                <svg class="emoji" viewBox="650 762 168 168" role="img" aria-label="sirena">
                    <path fill="#a9a7a4" d="M676 882 L675 900 Q685 919 734 920 Q783 919 793 900 L791 882Z"/>
                    <path fill="url(#siren)" d="M680 775 Q683 766 734 765 Q785 766 787 775 L792 886 Q780 902 734 903 Q686 902 676 886Z"/>
                    <path fill="#a51b12" d="M677 878 Q734 895 791 878 L792 888 Q780 903 734 904 Q686 902 676 888Z M740 795 L760 790 L752 805 L770 830 L750 828 L765 852 L745 848Z M700 800 L722 797 L715 810Z"/>
                    <circle cx="756" cy="797" r="11" fill="#f3a397"/>
                    <path fill="#ffe9e6" d="M718 788 L723 815 L741 806 L731 825 L765 829 L731 836 L742 856 L724 843 L719 872 L713 844 L694 860 L705 836 L676 829 L705 823 L694 803 L713 815Z"/>
                    <circle cx="718" cy="829" r="13" fill="#fff"/>
                </svg></strong>*<br>Tus 4 productos más vendidos están en<br>cero:</p>
            <ul>
                <li><span>Bandeja Acacia, Vasos de Vidrio,<br>Frascos de Vidrio y Canastos de<br>Bamboo</span></li>
            </ul>
            <p>Eso es ventas que estás perdiendo ahora<br>mismo. Es lo primero que haría.</p>
            <p class="para"><strong>*2. Empujá lo que sí tenés stock</strong>*<br>Tenés 47 unidades de <strong>*Set 12 Cubiertos<br>de Madera</strong>* y 12 del <strong>*Set Aceitero/<br>Vinagrero</strong>*. ¿Estás mostrándolos bien? A</p>
        </div>

        <div class="scrollbar"></div>
        <button class="down-btn" aria-label="Ir al final">
            <svg width="38" height="24" viewBox="0 0 38 24"><path d="M4 4 L19 19 L34 4" fill="none" stroke="#fafafa" stroke-width="5" stroke-linecap="round" stroke-linejoin="round"/></svg>
        </button>
    </main>

    <footer class="composer">
        <button class="icon-btn" aria-label="Adjuntar">
            <svg width="60" height="60" viewBox="0 0 60 60"><path d="M30 3 V57 M3 30 H57" stroke="#fff" stroke-width="5" stroke-linecap="round"/></svg>
        </button>
        <div class="field">
            <input type="text" aria-label="Mensaje">
            <button class="icon-btn" aria-label="Stickers">
                <svg width="56" height="56" viewBox="0 0 56 56" fill="none" stroke="#fff" stroke-width="4" stroke-linejoin="round">
                    <path d="M30 53 H24 Q2 53 2 30 V24 Q2 3 24 3 H32 Q54 3 54 24 Q54 33 49 38 L39 48 Q34 53 30 53Z M30 53 V44 Q31 31 44 31 Q52 31 53 28"/>
                </svg>
            </button>
        </div>
        <button class="icon-btn camera" aria-label="Cámara">
            <svg width="70" height="56" viewBox="0 0 70 56" fill="none" stroke="#fff" stroke-width="4" stroke-linejoin="round">
                <path d="M8 10 H17 Q20 10 22 7 L24 4 Q26 3 28 3 H42 Q44 3 46 4 L48 7 Q50 10 53 10 H62 Q68 10 68 16 V47 Q68 53 62 53 H8 Q2 53 2 47 V16 Q2 10 8 10Z"/>
                <circle cx="35" cy="31" r="14"/>
                <circle cx="55" cy="21" r="3" fill="#fff" stroke="none"/>
            </svg>
        </button>
        <button class="icon-btn" aria-label="Nota de voz">
            <svg width="48" height="70" viewBox="0 0 48 70" fill="none" stroke="#fff" stroke-width="4" stroke-linecap="round">
                <rect x="13" y="2" width="22" height="46" rx="11"/>
                <path d="M3 36 Q4 59 24 59 Q44 59 45 36 M24 59 V68"/>
            </svg>
        </button>
    </footer>

    <svg class="defs" width="0" height="0" aria-hidden="true">
        <defs>
            <path id="checks" d="M2 15 L8 21 L22 2 M16 19 L19 21 L33 2" fill="none" stroke="currentColor" stroke-width="3" stroke-linecap="round" stroke-linejoin="round"/>
            <path id="tail-shape" d="M8 0 H22 C23 22 28 38 40 49 V50 C29 50 18 47 11 41 L6 30Z"/>
            <linearGradient id="skin" x1="0" y1="0" x2="0" y2="1"><stop offset="0" stop-color="#ffcb38"/><stop offset=".8" stop-color="#fdb924"/><stop offset="1" stop-color="#e79a10"/></linearGradient>
            <radialGradient id="bulb" cx=".5" cy=".4" r=".6"><stop offset="0" stop-color="#fffef5"/><stop offset=".6" stop-color="#fdf6cf"/><stop offset="1" stop-color="#f0cd68"/></radialGradient>
            <linearGradient id="siren" x1="0" y1="0" x2="0" y2="1"><stop offset="0" stop-color="#e2452f"/><stop offset=".6" stop-color="#ef2b1b"/><stop offset="1" stop-color="#c9160e"/></linearGradient>
        </defs>
    </svg>

    <script>
        // small bubbles scattered between the doodles: [x, y, radius]
        const dots = [
            [154,355,6],[198,354,10],[127,434,6],[206,462,6],[130,495,10],[401,419,6],[460,434,6],[493,426,11],[428,459,13],[580,415,6],[401,487,6],[572,497,6],[49,607,10],
            [786,352,6],[672,381,6],[635,469,6],[913,357,7],[995,351,6],[1043,345,10],[953,455,6],[907,538,6],[987,520,6],[1091,501,6],[1111,479,6],[1132,557,6],[1042,594,10],[1081,591,6],[989,600,6],[1078,671,6],[902,690,10],[912,733,13],
            [1014,771,10],[1056,764,6],[927,815,13],[934,862,10],[978,868,6],[1083,803,6],[43,827,10],[27,870,6],[1090,888,10],[1043,901,6],[911,938,10],[944,966,10],[1015,955,6],[1068,976,6],[1043,987,10],[1066,1011,6],[1095,1026,10],[38,1031,6],[877,1045,6],
            [672,1063,6],[904,1070,10],[1157,1178,6],[1095,1288,10],[1135,1295,6],[1043,1339,6],[1073,1357,13],[1044,1389,6],[727,1275,6],
            [190,1059,6],[111,1085,6],[229,1080,6],[161,1120,6],[60,1154,6],[104,1200,6],[216,1290,6],[100,1300,6],
            [1039,1446,10],[1089,1481,10],[1156,1439,6],[1075,1539,6],[964,1555,10],[1005,1567,6],[1044,1567,6],[1080,1581,10],[985,1618,6],[1063,1626,13],[1014,1663,10],[975,1689,10],[957,1725,6],[1111,1691,6],[961,1777,10],[1012,1799,6],[1175,1593,10],[1164,1644,13],
            [1020,1856,6],[925,1904,6],[1167,1895,6],[975,1977,6],[1104,1943,10],[1068,2025,6],[1167,2027,13],[934,2056,6],[1170,2063,6],[969,2122,6],[1007,2144,10],[977,2162,6],[1151,2154,6],[1032,2233,6],[1058,2236,10],[1073,2272,6],[1066,2314,6],[1104,2320,10]
        ];
        document.getElementById('bubbles').innerHTML = dots
            .map(([x, y, r]) => `<circle cx="${x}" cy="${y}" r="${r}"/>`)
            .join('');
    </script>
</body>
</html>
```
FILE: styles.css
```css
* {
    box-sizing: border-box;
}

body {
    margin: 0;
    height: 100vh;
    display: flex;
    flex-direction: column;
    background-color: #121312;
    color: #fafafa;
    font-family: Inter, "Liberation Sans", sans-serif;
    overflow: hidden;
}

h1, p, ul, blockquote {
    margin: 0;
    padding: 0;
}

button {
    border: none;
    padding: 0;
    background: none;
    color: inherit;
    font-family: inherit;
    cursor: pointer;
}

svg {
    display: block;
    flex-shrink: 0;
}

.defs {
    position: absolute;
}

/* header */
.top {
    padding: 0 48px 30px;
    background: linear-gradient(90deg, #141413, #131514 50%, #101010);
}

.status-bar {
    display: flex;
    align-items: center;
    height: 177px;
    padding: 0 50px 0 82px;
}

.clock {
    font-size: 52px;
    font-weight: 600;
}

.bell {
    margin-left: 14px;
}

.status-icons {
    display: flex;
    align-items: center;
    gap: 22px;
    margin-left: auto;
}

.nav {
    display: flex;
    align-items: center;
}

.glass {
    display: flex;
    align-items: center;
    justify-content: center;
    height: 132px;
    border-radius: 66px;
    background-color: #1f1f1f;
    border: 2px solid #3a3a3a;
}

.back-btn {
    width: 132px;
    padding-left: 4px;
    gap: 16px;
    font-size: 50px;
}

.avatar {
    display: flex;
    align-items: center;
    justify-content: center;
    gap: 3px;
    width: 120px;
    height: 120px;
    margin: 0 26px;
    border-radius: 50%;
    background-color: #fff;
    color: #000;
    font: bold 18px "DejaVu Sans", sans-serif;
}

.avatar i {
    width: 8px;
    height: 8px;
    border-radius: 50%;
    background-color: #2cc665;
}

.nav h1 {
    font-size: 46px;
    font-weight: 600;
}

.call-btn {
    width: 150px;
    margin-left: auto;
    padding-left: 8px;
    gap: 8px;
}

/* chat */
.chat {
    position: relative;
    flex: 1;
    min-height: 0;
    display: flex;
    flex-direction: column;
    gap: 40px;
    padding: 34px 50px 0;
    background-color: #090909;
    overflow: hidden;
}

.wallpaper {
    position: absolute;
    inset: 0;
    width: 100%;
    height: 100%;
    fill: none;
    stroke: #212121;
    stroke-width: 3;
    stroke-linecap: round;
    stroke-linejoin: round;
}

.wallpaper * {
    vector-effect: non-scaling-stroke;
}

.day {
    font-size: 48px;
    font-weight: 700;
}

.message {
    position: relative;
    max-width: 82%;
    padding: 14px 30px 12px 28px;
    border-radius: 34px;
    font-size: 41px;
    line-height: 57px;
}

.in {
    align-self: flex-start;
    min-width: 78%;
    background-color: #242625;
    fill: #242625;
}

.out {
    align-self: flex-end;
    padding-left: 26px;
    padding-right: 28px;
    background-color: #154d37;
    fill: #154d37;
}

.last {
    min-width: 80%;
    flex-grow: 1;
    flex-shrink: 0;
    padding-bottom: 0;
    border-radius: 34px 34px 0 0;
}

.tail {
    position: absolute;
    right: -18px;
    bottom: 0;
}

.in .tail {
    right: auto;
    left: -18px;
    transform: scaleX(-1);
}

.para {
    margin-top: 57px;
}

.message strong {
    font-weight: 700;
}

.inline-row {
    display: flex;
    align-items: flex-end;
    gap: 32px;
}

.meta {
    display: flex;
    justify-content: flex-end;
    align-items: center;
    gap: 8px;
    margin-top: 21px;
    font-size: 27px;
    font-variant-numeric: tabular-nums;
    line-height: 30px;
    color: #a1a2a2;
}

.out .meta {
    color: #a1b8af;
}

.emoji {
    display: inline-block;
    width: 56px;
    height: 56px;
    margin: -10px 2px;
    vertical-align: -2px;
}

.emoji.tight {
    margin: -10px 0;
}

strong .emoji {
    margin: -10px 0 -10px 10px;
}

blockquote {
    position: relative;
    margin-top: 69px;
    padding-left: 46px;
    color: #a1a2a2;
}

blockquote::before {
    content: "";
    position: absolute;
    left: 0;
    top: 5px;
    bottom: 8px;
    width: 8px;
    border-radius: 4px;
    background-color: #939494;
}

.message ul {
    margin: 12px 0;
    list-style: none;
}

.message li {
    display: flex;
}

.message li::before {
    content: "•";
    width: 38px;
    padding-left: 10px;
    flex-shrink: 0;
}

.scrollbar {
    position: absolute;
    right: 9px;
    top: 1227px;
    width: 9px;
    height: 213px;
    border-radius: 5px;
    background-color: #838383;
}

.down-btn {
    position: absolute;
    right: 27px;
    bottom: 72px;
    display: flex;
    align-items: center;
    justify-content: center;
    width: 96px;
    height: 96px;
    border-radius: 50%;
    background-color: #242625;
}

/* message composer */
.composer {
    display: flex;
    align-items: center;
    padding: 30px 51px 126px 40px;
    background: linear-gradient(90deg, #141514, #131413 60%, #0f0f0f);
}

.field {
    display: flex;
    align-items: center;
    flex: 1;
    min-width: 0;
    height: 81px;
    margin-left: 41px;
    padding: 0 34px 0 40px;
    border: 1px solid #3b3c3c;
    border-radius: 41px;
    background-color: #2c2d2c;
}

.field input {
    flex: 1;
    min-width: 0;
    border: none;
    outline: none;
    background: none;
    color: #fafafa;
    font: inherit;
    font-size: 41px;
}

.camera {
    margin: 0 58px 0 56px;
}
```
